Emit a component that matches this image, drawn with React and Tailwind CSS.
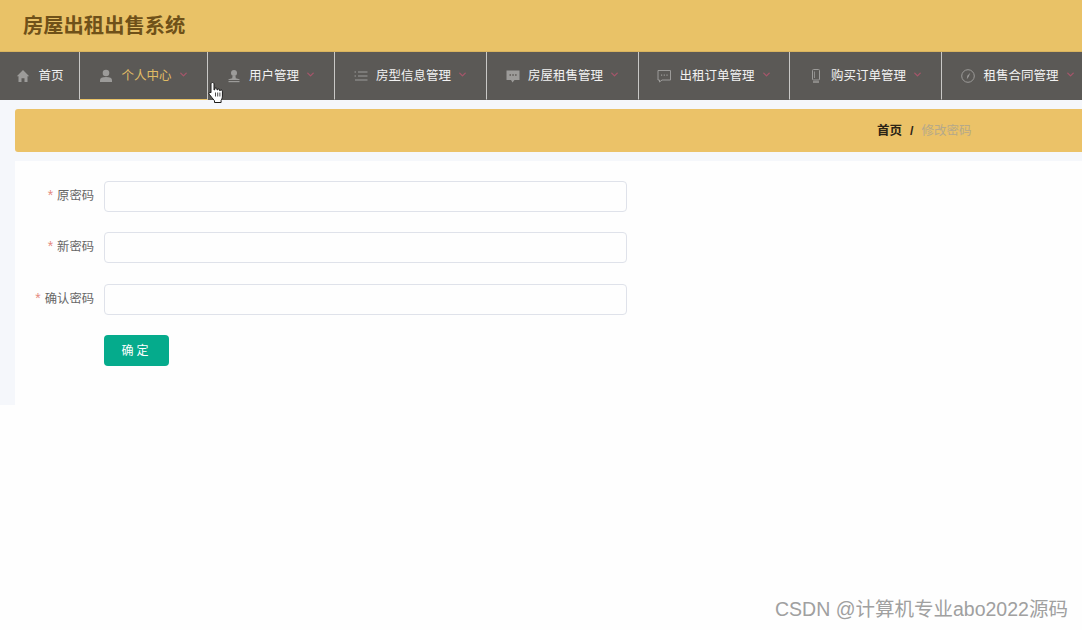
import React from "react";
import { ChevronDown } from "lucide-react";

const menus = [
  { label: "首页", icon: "home", width: "w-[80px]", arrow: false },
  { label: "个人中心", icon: "user", width: "w-[128px]", arrow: true, active: true },
  { label: "用户管理", icon: "user2", width: "w-[127px]", arrow: true },
  { label: "房型信息管理", icon: "list", width: "w-[152px]", arrow: true },
  { label: "房屋租售管理", icon: "chat", width: "w-[152px]", arrow: true },
  { label: "出租订单管理", icon: "chat2", width: "w-[151px]", arrow: true },
  { label: "购买订单管理", icon: "phone", width: "w-[152px]", arrow: true },
  { label: "租售合同管理", icon: "compass", width: "w-[152px]", arrow: true, last: true },
];

const MenuIcon = ({ name }) => {
  const cls = "w-[14px] h-[14px] text-[#9c9b99] shrink-0";
  return (
    <svg className={cls} viewBox="0 0 14 14" fill="none" stroke="currentColor" strokeWidth="1">
      {name === "home" && <path d="M7 1 .8 7.200h1.700V13h3V9.200h3V13h3V7.200h1.700z" fill="currentColor" stroke="none" />}
      {name === "user" && (
        <g fill="currentColor" stroke="none">
          <circle cx="7" cy="4" r="3.300" />
          <path d="M1 13v-1.800C1 9 3 8 7 8s6 1 6 3.200V13z" />
        </g>
      )}
      {name === "user2" && (
        <g fill="currentColor" stroke="none">
          <circle cx="7" cy="4" r="3" />
          <path d="M5.500 7h3l.3 2.200 3.700 1V11h-11v-.8l3.700-1z" />
          <rect x="1.500" y="12" width="11" height="1.200" />
        </g>
      )}
      {name === "list" && (
        <g strokeWidth="1.200">
          <path d="M4 3h9.500M4 7h9.500M1 11h12.500" />
          <path d="M.500 3H2M.500 7H2" />
        </g>
      )}
      {name === "chat" && (
        <g>
          <path d="M.500 1.500h13v9.500H8.500L6.500 13.500 5 11H.500z" fill="currentColor" stroke="none" />
          <path d="M3.500 6h1.500M6.300 6h1.500M9.100 6h1.500" stroke="#5d5a56" strokeWidth="1.500" />
        </g>
      )}
      {name === "chat2" && (
        <g>
          <path d="M1 1.500h12.500v9.500H5L2.500 13V11H1z" />
          <path d="M4 6.200h1.200M6.700 6.200h1.200M9.400 6.200h1.200" strokeWidth="1.200" />
        </g>
      )}
      {name === "phone" && (
        <g>
          <rect x="3.500" y=".500" width="7" height="10.500" rx="1" />
          <path d="M5.500 2.500v6.500" strokeWidth=".8" />
          <path d="M4 13h6" strokeWidth="1.500" />
        </g>
      )}
      {name === "compass" && (
        <g>
          <circle cx="7" cy="7" r="6.300" />
          <path d="M9.300 3.800 7.700 7.800 5.800 10.200 6.300 6.800z" fill="currentColor" stroke="none" />
        </g>
      )}
    </svg>
  );
};

const fields = [
  { label: "原密码", mt: "mt-0" },
  { label: "新密码", mt: "mt-[20px]" },
  { label: "确认密码", mt: "mt-[21px]" },
];

const App = () => {
  return (
    <div className="relative w-[1082px] h-[630px] overflow-hidden bg-[#fefefe] font-['Liberation_Sans','Noto_Sans_CJK_SC',sans-serif]">
      <div className="h-[52px] bg-[#e9c267] border-b border-[#d9b45f] flex items-center pl-[23px] pt-[2px]">
        <h1 className="text-[20.3px] font-bold text-[#6f5119]">房屋出租出售系统</h1>
      </div>

      <div className="h-[48px] bg-[#5b5956] flex overflow-hidden">
        {menus.map((m) => (
          <div
            key={m.label}
            className={`${m.width} shrink-0 h-full flex items-center justify-center pl-[1px] pt-[1px] border-b ${m.last ? "" : "border-r border-r-[#c9c8c6]"} ${m.active ? "border-b-[#e9c267]" : "border-b-transparent"}`}
          >
            <MenuIcon name={m.icon} />
            <span className={`ml-[8px] text-[12.5px] whitespace-nowrap ${m.active ? "text-[#e0bc65]" : "text-[#f2f2f2]"}`}>{m.label}</span>
            {m.arrow && <ChevronDown className="ml-[6px] w-[11px] h-[11px] text-[#a4566a] -mt-[3px]" strokeWidth={3} />}
          </div>
        ))}
      </div>

      <div className="h-[305px] bg-[#f5f7fb] pl-[15px] pt-[9px]">
        <div className="h-[43px] bg-[#ebc268] rounded-l-[3px] flex items-center pl-[862px] pt-[1px] text-[12.5px]">
          <span className="font-bold text-[#2b2416]">首页</span>
          <span className="font-bold text-[#2b2416] mx-[8px]">/</span>
          <span className="text-[#b5a98a]">修改密码</span>
        </div>

        <div className="mt-[9px] h-[244px] bg-[#fefefe] pt-[20px]">
          {fields.map((f) => (
            <div key={f.label} className={`flex items-center ${f.mt}`}>
              <label className="w-[79px] -mt-[2px] text-right text-[12.3px] text-[#666666] whitespace-nowrap">
                <span className="text-[14px] text-[#e58a80] mr-[4px]">*</span>
                {f.label}
              </label>
              <input className="ml-[10px] w-[523px] h-[31px] bg-[#fefefe] border border-[#dfe2ea] rounded-[4px]" />
            </div>
          ))}
          <button className="block ml-[89px] mt-[20px] w-[65px] h-[31px] bg-[#05ab8c] rounded-[4px] text-[12px] text-white tracking-[3px]">
            确定
          </button>
        </div>
      </div>

      <svg className="absolute left-[208px] top-[82px]" width="16" height="22" viewBox="0 0 16 22">
        <path
          d="M4.500.500c1 0 1.500.7 1.500 1.600V8l.7-.2V7c0-1.400 2.300-1.400 2.300 0v1h.5c0-1.300 2.200-1.300 2.200 0v.7h.4c.2-1.100 2.300-1 2.300.4v5c0 2-.7 3-1.300 4.200v2.200H6.500v-1.700C5 17 3 14.500 1.300 12.300.3 11 1.700 9.600 3 10.700V2.100C3 1.200 3.600.5 4.500.5z"
          fill="#fff"
          stroke="#1a1a1a"
          strokeWidth="1"
          strokeLinejoin="round"
        />
        <path d="M7.500 10.500v4M9.700 10.500v4M11.900 10.500v4" stroke="#1a1a1a" strokeWidth="0.8" />
      </svg>

      <div className="absolute left-[775px] top-[598px] text-[19.5px] leading-[22px] text-[#a0a0a0] whitespace-nowrap">
        CSDN @计算机专业abo2022源码
      </div>
    </div>
  );
};

export default App;
